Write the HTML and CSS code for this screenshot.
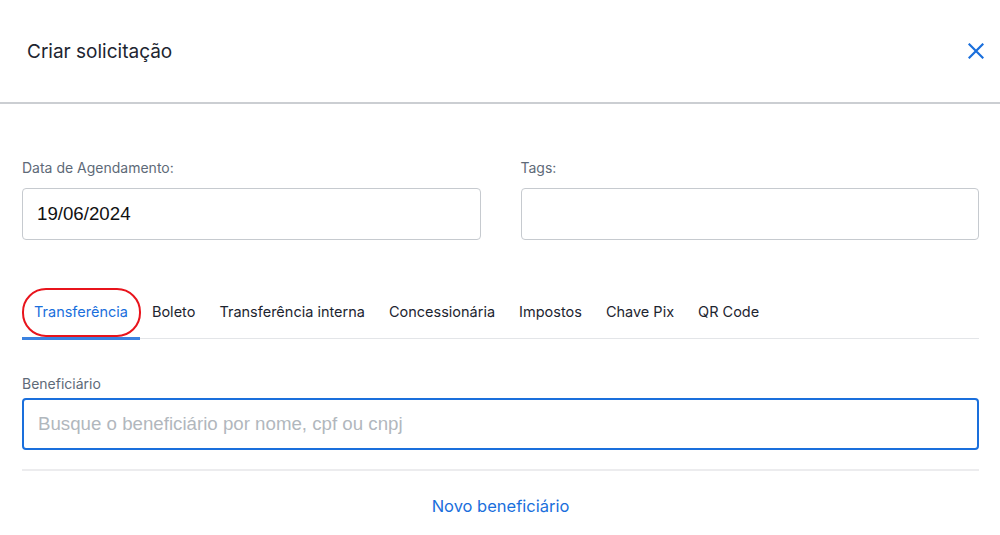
FILE: index.html
```html
<!DOCTYPE html>
<html lang="pt-BR">
<head>
<meta charset="utf-8">
<title>Criar solicitação</title>
<link rel="stylesheet" href="styles.css">
</head>
<body>
<div class="modal">
  <header class="modal-header">
    <h1 class="title">Criar solicitação</h1>
    <button class="close" aria-label="Fechar">
      <svg width="16" height="16" viewBox="0 0 16 16"><path d="M1.5 1.5 L14.5 14.5 M14.5 1.5 L1.5 14.5" stroke="#1a6fdc" stroke-width="2.2" stroke-linecap="square" fill="none"/></svg>
    </button>
  </header>
  <main class="modal-body">
    <div class="row">
      <div class="field">
        <label class="label">Data de Agendamento:</label>
        <div class="input">19/06/2024</div>
      </div>
      <div class="field">
        <label class="label">Tags:</label>
        <div class="input"></div>
      </div>
    </div>
    <nav class="tabs">
      <div class="tab active">Transferência<span class="highlight"></span></div>
      <div class="tab">Boleto</div>
      <div class="tab">Transferência interna</div>
      <div class="tab">Concessionária</div>
      <div class="tab">Impostos</div>
      <div class="tab">Chave Pix</div>
      <div class="tab">QR Code</div>
    </nav>
    <div class="benef">
      <label class="label">Beneficiário</label>
      <div class="input focus"><span class="placeholder">Busque o beneficiário por nome, cpf ou cnpj</span></div>
    </div>
    <div class="divider"></div>
    <div class="new-link">Novo beneficiário</div>
  </main>
</div>
</body>
</html>
```
FILE: styles.css
```css
* { box-sizing: border-box; }
html, body { margin: 0; padding: 0; background: #fff; }
body { font-family: Inter, "Noto Sans", sans-serif; color: #1d2530; width: 1000px; height: 535px; overflow: hidden; }
.modal-header {
  height: 104px;
  border-bottom: 2px solid #cbced2;
  display: flex;
  align-items: center;
  justify-content: space-between;
  padding: 0 16px 0 27px;
}
.title { margin: 0; font-size: 19px; font-weight: 400; color: #1d2530; letter-spacing: 0; }
.close { border: 0; background: none; padding: 0; width: 16px; height: 16px; display: flex; margin-right: 0; }
.modal-body { padding: 54px 21px 0 22px; }
.row { display: flex; gap: 40px; }
.field { flex: 1; display: flex; flex-direction: column; }
.label { font-size: 14px; color: #5e6a78; line-height: 20px; margin-bottom: 10px; }
.input {
  height: 52px;
  border: 1.5px solid #c6cacf;
  border-radius: 4px;
  display: flex;
  align-items: center;
  padding: 0 14px;
  font-family: "Liberation Sans", Arial, sans-serif;
  font-size: 18.7px;
  color: #111;
}
.tabs {
  margin-top: 44px;
  display: flex;
  border-bottom: 1.5px solid #e3e5e8;
  height: 55px;
  align-items: stretch;
}
.tab {
  position: relative;
  padding: 0 12px;
  font-size: 14.5px;
  color: #1d2530;
  display: flex;
  align-items: center;
}
.tab.active { color: #1a6fdc; }
.tab.active::after {
  content: "";
  position: absolute;
  left: 0; right: 0; bottom: -1.5px;
  height: 3px;
  background: #3b82e0;
}
.highlight {
  position: absolute;
  left: 0; right: -1px; top: 4px; bottom: 1px;
  border: 2.5px solid #e8141c;
  border-radius: 24px;
  pointer-events: none;
}
.benef { margin-top: 35px; }
.benef .label { margin-bottom: 4px; display: block; }
.input.focus { border: 2px solid #1a6fdc; border-radius: 4px; }
.placeholder { color: #b1b7bd; }
.divider { margin-top: 19px; height: 2px; background: #ececee; }
.new-link { text-align: center; color: #1a6fdc; font-size: 16.5px; margin-top: 25px; }
```
